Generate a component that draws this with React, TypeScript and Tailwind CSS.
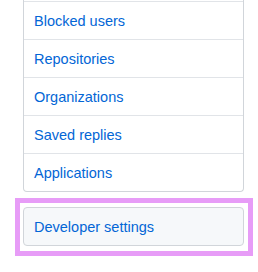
export default function App() {
  const items = ["Blocked users", "Repositories", "Organizations", "Saved replies", "Applications"];
  return (
    <div
      className="relative w-[258px] h-[272px] bg-white overflow-hidden"
      style={{ fontFamily: '"Liberation Sans", Arial, sans-serif' }}
    >
      <nav className="ml-[23px] w-[221px] border-x border-b border-[#d1d5da] rounded-b-[4px]">
        <div className="h-px" />
        {items.map((t) => (
          <a
            key={t}
            className="block border-t border-[#e1e4e8] px-[10px] pt-[9px] pb-[7px] text-[14.5px] leading-[21px] text-[#0366d6]"
          >
            {t}
          </a>
        ))}
      </nav>
      <div className="ml-[23px] mt-[15px] w-[221px] border border-[#d1d5da] rounded-[4px] bg-[#f6f8fa] px-[10px] pt-[9px] pb-[7px] text-[14.5px] leading-[21px] text-[#0366d6]">
        Developer settings
      </div>
      <div className="absolute left-[15px] top-[198px] w-[238px] h-[58px] border-[5px] border-[#e79cf7]" />
    </div>
  );
}
